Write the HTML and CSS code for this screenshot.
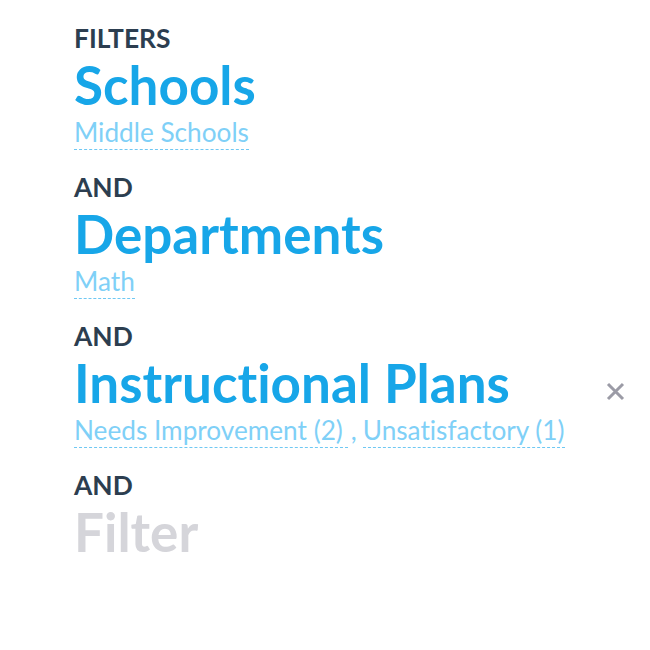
FILE: index.html
```html
<!DOCTYPE html>
<html>
<head>
<meta charset="utf-8">
<link rel="stylesheet" href="styles.css">
</head>
<body>
<div class="filters">
  <div class="group">
    <div class="label">FILTERS</div>
    <div class="title">Schools</div>
    <div class="values"><span class="value">Middle Schools</span></div>
  </div>
  <div class="group">
    <div class="label">AND</div>
    <div class="title">Departments</div>
    <div class="values"><span class="value">Math</span></div>
  </div>
  <div class="group">
    <div class="label">AND</div>
    <div class="title-row">
      <div class="title">Instructional Plans</div>
      <span class="close">
        <svg width="19" height="19" viewBox="0 0 19 19"><path d="M2 2L17 17M17 2L2 17" stroke="#9b9ba6" stroke-width="3"/></svg>
      </span>
    </div>
    <div class="values"><span class="value trail">Needs Improvement (2)</span><span class="sep">,</span><span class="value">Unsatisfactory (1)</span></div>
  </div>
  <div class="group">
    <div class="label">AND</div>
    <div class="title placeholder">Filter</div>
  </div>
</div>
</body>
</html>
```
FILE: styles.css
```css
html, body {
  margin: 0;
  padding: 0;
  background: #ffffff;
}
body {
  font-family: "Lato", "Open Sans", sans-serif;
  font-variant-ligatures: none;
}
.filters {
  display: flex;
  flex-direction: column;
  gap: 22px;
  padding: 23px 25px 0 74px;
}
.group {
  display: flex;
  flex-direction: column;
}
.label {
  font-size: 26.4px;
  font-weight: 700;
  color: #2c3e50;
  line-height: 30px;
}
.title-row {
  display: flex;
  align-items: flex-start;
  justify-content: space-between;
}
.title {
  font-size: 53px;
  font-weight: 700;
  color: #17a6e8;
  line-height: 63px;
}
.title.placeholder {
  color: #d5d5da;
}
.close {
  display: flex;
  margin-top: 31px;
}
.values {
  display: flex;
  align-items: baseline;
  font-size: 26.2px;
  color: #7fd0f7;
  line-height: 32px;
}
.value {
  border-bottom: 1px dashed #6fc8f3;
  padding-bottom: 1px;
}
.value.trail {
  padding-right: 5px;
}
.sep {
  margin: 0 6px 0 3px;
}
```
